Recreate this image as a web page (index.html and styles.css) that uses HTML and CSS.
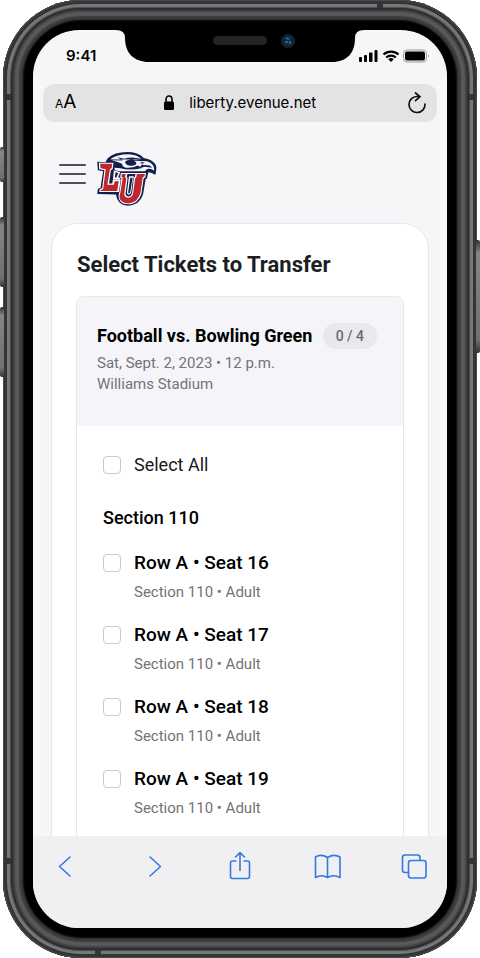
FILE: index.html
```html
<!DOCTYPE html>
<html lang="en">
<head>
<meta charset="utf-8">
<meta name="viewport" content="width=device-width, initial-scale=1">
<title>Select Tickets to Transfer</title>
<link rel="stylesheet" href="styles.css">
</head>
<body>
<div class="phone">
  <span class="side-key key-mute"></span>
  <span class="side-key key-up"></span>
  <span class="side-key key-down"></span>
  <span class="side-key key-power"></span>
  <span class="antenna antenna-top"></span>
  <span class="antenna antenna-bottom"></span>
  <span class="antenna antenna-left-high"></span>
  <span class="antenna antenna-left-low"></span>
  <span class="antenna antenna-right-high"></span>
  <span class="antenna antenna-right-low"></span>
  <div class="screen">
    <svg class="notch" viewBox="0 0 248 34" width="248" height="34" aria-hidden="true">
      <path d="M0 0H248V1Q239 1 239 9C239 24 231 33 216 33H33C18 33 9 24 9 9Q9 1 0 1Z" fill="#000"/>
      <rect x="97" y="7" width="54" height="9" rx="4.500" fill="#232325"/>
      <circle cx="172" cy="12" r="7" fill="#1b1f26"/>
      <circle cx="172" cy="12" r="4.500" fill="#0c2c44"/>
      <path d="M170 9l3 1M169 13h3M174 12v3" stroke="#21658f" stroke-width="2"/>
    </svg>
    <div class="status">
      <span class="time">9:41</span>
      <svg viewBox="0 0 70 14" width="70" height="14" aria-hidden="true">
        <g fill="#000">
          <rect x="0" y="8" width="3" height="5" rx="1"/>
          <rect x="5" y="6" width="3" height="7" rx="1"/>
          <rect x="10" y="3.500" width="3.500" height="9.500" rx="1"/>
          <rect x="15.500" y="1" width="3" height="12" rx="1"/>
          <path d="M32 13l-2.700-2.700a4 4 0 0 1 5.400 0z"/>
        </g>
        <path d="M24.500 5.500a11 11 0 0 1 15 0M27.200 8.500a7 7 0 0 1 9.600 0" fill="none" stroke="#000" stroke-width="2.200"/>
        <rect x="44.500" y="1" width="23" height="12" rx="3.500" fill="none" stroke="#999"/>
        <rect x="46" y="2.500" width="20" height="9" rx="2" fill="#000"/>
        <path d="M69 5q1.500 2 0 4z" fill="#999"/>
      </svg>
    </div>
    <div class="address">
      <button class="text-size" type="button" aria-label="Text size"><small>A</small>A</button>
      <div class="url">
        <svg viewBox="0 0 12 16" width="12" height="16" aria-hidden="true">
          <path d="M3 7V4.500a3 3.500 0 0 1 6 0V7" fill="none" stroke="#000" stroke-width="1.600"/>
          <rect x="1" y="6.500" width="10" height="8.500" rx="1.500"/>
        </svg>
        <span>liberty.evenue.net</span>
      </div>
      <button class="reload" type="button" aria-label="Reload">
        <svg viewBox="0 0 20 22" width="20" height="22" aria-hidden="true">
          <path d="M18 12a8 8 0 1 1-8-7.500h2.500M8.500 1l4.500 3.700-4.500 4" fill="none" stroke="#111" stroke-width="1.700" stroke-linecap="round" stroke-linejoin="round"/>
        </svg>
      </button>
    </div>
    <main class="page">
      <header class="site">
        <button class="menu" type="button" aria-label="Menu"><i></i><i></i><i></i></button>
        <svg class="logo" viewBox="20 20 182 165" width="60" height="54" role="img" aria-label="LU">
          <path fill="#14204c" d="M20 50L45 51L52 39Q72 20 112 20Q145 20 162 38Q190 43 199 60Q203 72 197 90Q188 82 176 82L172 101L168 103L160 150Q150 182 114 184Q82 183 77 150L20 148L22 132L30 130L38 79L22 76Z"/>
          <path fill="#f6f6fa" d="M60 42Q80 27 116 27Q140 28 155 41L128 37Q112 37 104 41L80 36Q92 42 98 46L64 45Q84 50 96 56Q96 65 107 68Q127 70 144 61L158 69Q120 78 91 70L72 68L75 76L89 79H165L173 72Q185 70 194 77Q195 60 181 52Q171 47 158 48Q145 46 132 47Q144 53 137 59Q126 65 112 60Q101 52 109 47Q128 38 156 43"/>
          <path fill="#14204c" d="M106 49Q117 43 128 49L137 50Q130 57 118 54L126 61Q107 61 106 49ZM151 51L166 52L157 57ZM155 59L181 61L188 68L166 65L150 69Z"/>
          <path fill="#fff" d="M25 53H70L67 73L62 75L56 116H66L68 104H92L86 142H26L28 133L35 131L42 76L26 73Z"/>
          <path fill="#bd272d" d="M29 56H66L64 70L59 72L51 120H71L73 109H86L81 139H30L31 136L38 134L46 73L30 70Z"/>
          <path fill="#fff" d="M71 76L90 82L84 98L91 99L89 104H68Z"/>
          <path fill="#14204c" d="M76 81L84 85L79 97L74 99Z"/>
          <path fill="#fff" d="M92 84H169L167 98L162 100L155 148Q145 179 114 180Q84 179 85 153L88 141L94 100L90 98Z"/>
          <path fill="#bd272d" d="M95 87H166L164 95L159 97L152 146Q143 175 115 177Q86 176 88 154L91 143L98 98L94 96Z"/>
          <path fill="#fff" d="M107 87H141L139 98L136 100L130 144Q127 160 114 160Q101 159 103 144L109 100L105 98Z"/>
          <path fill="#14204c" d="M112 87H137L135 96L132 98L127 143Q124 156 115 156Q105 155 107 144L113 99L110 97Z"/>
          <path fill="#fff" d="M117 94H132L129 104L124 142Q122 151 116 151Q110 149 111 142Z"/>
          <path fill="#14204c" d="M121 99H128L121 142Q119 147 116 147Q114 145 115 141Z"/>
        </svg>
      </header>
      <section class="card">
        <h1>Select Tickets to Transfer</h1>
        <div class="event">
          <div class="event-head">
            <div class="event-title">
              <h2>Football vs. Bowling Green</h2>
              <span class="count">0 / 4</span>
            </div>
            <p>Sat, Sept. 2, 2023 • 12 p.m.</p>
            <p>Williams Stadium</p>
          </div>
          <div class="tickets">
            <label class="pick all"><input type="checkbox"><span>Select All</span></label>
            <h3>Section 110</h3>
            <label class="pick seat"><input type="checkbox"><span><b>Row A • Seat 16</b><small>Section 110 • Adult</small></span></label>
            <label class="pick seat"><input type="checkbox"><span><b>Row A • Seat 17</b><small>Section 110 • Adult</small></span></label>
            <label class="pick seat"><input type="checkbox"><span><b>Row A • Seat 18</b><small>Section 110 • Adult</small></span></label>
            <label class="pick seat"><input type="checkbox"><span><b>Row A • Seat 19</b><small>Section 110 • Adult</small></span></label>
          </div>
        </div>
      </section>
    </main>
    <nav class="toolbar">
      <button type="button" aria-label="Back"><svg viewBox="0 0 28 30" width="28" height="30"><path d="M19 6L8.500 15.500L19 25"/></svg></button>
      <button type="button" aria-label="Forward"><svg viewBox="0 0 28 30" width="28" height="30"><path d="M11 6L21.500 15.500L11 25"/></svg></button>
      <button type="button" aria-label="Share"><svg viewBox="0 0 28 30" width="28" height="30"><path d="M10 10H6.500Q4.500 10 4.500 12V25.500Q4.500 27.500 6.500 27.500H21.500Q23.500 27.500 23.500 25.500V12Q23.500 10 21.500 10H18M14 19.500V2M9.500 6L14 1.700L18.500 6"/></svg></button>
      <button type="button" aria-label="Bookmarks"><svg viewBox="0 0 28 30" width="28" height="30"><path d="M13.500 6.500Q7 2.500 1.500 6V26.500Q7.500 23 13.500 26.500Q19.500 23 26 26.500V6Q20 2.500 13.500 6.500V26.500"/></svg></button>
      <button type="button" aria-label="Tabs"><svg viewBox="0 0 28 30" width="28" height="30"><rect x="7.500" y="9.500" width="17.500" height="17.500" rx="2.500"/><path d="M7.500 21.500H4Q1.500 21.500 1.500 19V6.500Q1.500 4 4 4H16.500Q19 4 19 6.500V9.500"/></svg></button>
    </nav>
  </div>
</div>
</body>
</html>
```
FILE: styles.css
```css
* { box-sizing: border-box; }

body {
  margin: 0;
  background: #fff;
  font-family: Roboto, "Liberation Sans", sans-serif;
}

h1, h2, h3, p { margin: 0; }

button {
  padding: 0;
  border: 0;
  background: none;
  color: inherit;
  font: inherit;
}

svg { display: block; }

/* Device frame: metal rings painted from the outside in */
.phone {
  position: relative;
  height: 100vh;
  margin: 0 3px;
  padding: 30px;
  border-radius: 78px;
  background: #000;
  box-shadow:
    inset 0 0 0 1px #48494a,
    inset 0 0 0 4px #343536,
    inset 0 0 1px 7px #77787a,
    inset 0 0 0 8px #4b4c4e,
    inset 0 0 0 10px #2c2d2e,
    inset 0 0 1px 12px #424345,
    inset 0 0 1px 16px #58595b,
    inset 0 0 2px 20px #3c3d3e;
}

.screen {
  position: relative;
  display: flex;
  flex-direction: column;
  height: 100%;
  overflow: hidden;
  border-radius: 46px;
  background: #f6f6f9;
}

.side-key {
  position: absolute;
  left: -3px;
  width: 4px;
  border-radius: 2px 0 0 2px;
  background: linear-gradient(#333, #858585 12%, #707070 88%, #333);
}
.key-mute { top: 147px; height: 35px; }
.key-up { top: 217px; height: 70px; }
.key-down { top: 307px; height: 70px; }
.key-power {
  top: 240px;
  right: -3px;
  left: auto;
  height: 113px;
  border-radius: 0 2px 2px 0;
}

.antenna { position: absolute; background: #333436; }
.antenna-top, .antenna-bottom { width: 6px; height: 7px; }
.antenna-top { top: 1px; right: 94px; }
.antenna-bottom { bottom: 1px; left: 92px; }
.antenna-left-high, .antenna-left-low,
.antenna-right-high, .antenna-right-low { width: 7px; height: 6px; }
.antenna-left-high { top: 94px; left: 1px; }
.antenna-right-high { top: 94px; right: 1px; }
.antenna-left-low { bottom: 94px; left: 1px; }
.antenna-right-low { bottom: 94px; right: 1px; }

.notch {
  position: absolute;
  top: -1px;
  left: calc(50% - 124px);
}

/* Browser chrome */
.status {
  display: flex;
  flex: none;
  align-items: center;
  justify-content: space-between;
  height: 54px;
  padding: 0 18px 2px 33px;
}
.time {
  font: 600 15px/20px Inter, sans-serif;
}

.address {
  display: flex;
  flex: none;
  align-items: center;
  justify-content: space-between;
  height: 38px;
  margin: 0 10px;
  padding: 0 10px 0 12px;
  border-radius: 12px;
  background: #e3e3e5;
  font: 400 15px/20px Inter, sans-serif;
}
.text-size { font-size: 19px; }
.text-size small { font-size: 12px; }
.url {
  display: flex;
  align-items: center;
  gap: 14px;
  padding-right: 4px;
}

/* Page */
.page {
  flex: 1;
  min-height: 0;
  overflow: hidden;
  padding: 0 18px;
}
.site {
  display: flex;
  align-items: center;
  gap: 11px;
  padding: 30px 8px 17px;
}
.menu {
  display: grid;
  gap: 7px;
  width: 27px;
  margin-bottom: 10px;
}
.menu i {
  height: 2px;
  border-radius: 1px;
  background: #4a515d;
}

.card {
  padding: 24px;
  border: 1px solid #e7e7ec;
  border-radius: 26px;
  background: #fff;
}
.card h1 {
  padding: 4px 1px 18px;
  color: #1b1e22;
  font-size: 22px;
  font-weight: 700;
  line-height: 26px;
}

.event {
  border: 1px solid #e7e7ec;
  border-radius: 8px;
  overflow: hidden;
}
.event-head {
  height: 129px;
  padding: 26px 20px 0;
  background: #f5f5f9;
  color: #717478;
  font-size: 15px;
  line-height: 21px;
}
.event-title {
  display: flex;
  align-items: center;
  justify-content: space-between;
  margin-bottom: 4px;
  padding-right: 6px;
}
.event h2 {
  color: #000;
  font-size: 18px;
  font-weight: 700;
  line-height: 26px;
}
.count {
  padding: 0 13px;
  border-radius: 13px;
  background: #e9e9ec;
  color: #686b70;
  font-size: 14px;
  font-weight: 500;
  line-height: 26px;
}

.tickets {
  padding: 26px;
  color: #17191c;
}
.tickets h3 {
  margin: 27px 0 19px;
  color: #000;
  font-size: 18px;
  font-weight: 500;
  line-height: 26px;
}
.pick {
  display: flex;
  gap: 13px;
  font-size: 18px;
  line-height: 26px;
}
.pick input {
  flex: none;
  width: 18px;
  height: 18px;
  margin: 4px 0;
  border: 1px solid #c9cace;
  border-radius: 4px;
  background: #fff;
  appearance: none;
}
.pick input:checked { background: #2f72dc; }
.seat { height: 72px; }
.seat b {
  display: block;
  color: #000;
  font-size: 19px;
  font-weight: 500;
}
.seat small {
  display: block;
  margin-top: 3px;
  color: #717478;
  font-size: 15px;
}

.toolbar {
  display: flex;
  flex: none;
  align-items: flex-start;
  justify-content: space-between;
  height: 92px;
  padding: 15px 18px;
  background: #f0f0f2;
}
.toolbar svg {
  fill: none;
  stroke: #3478e5;
  stroke-width: 1.600px;
  stroke-linecap: round;
  stroke-linejoin: round;
}
```
